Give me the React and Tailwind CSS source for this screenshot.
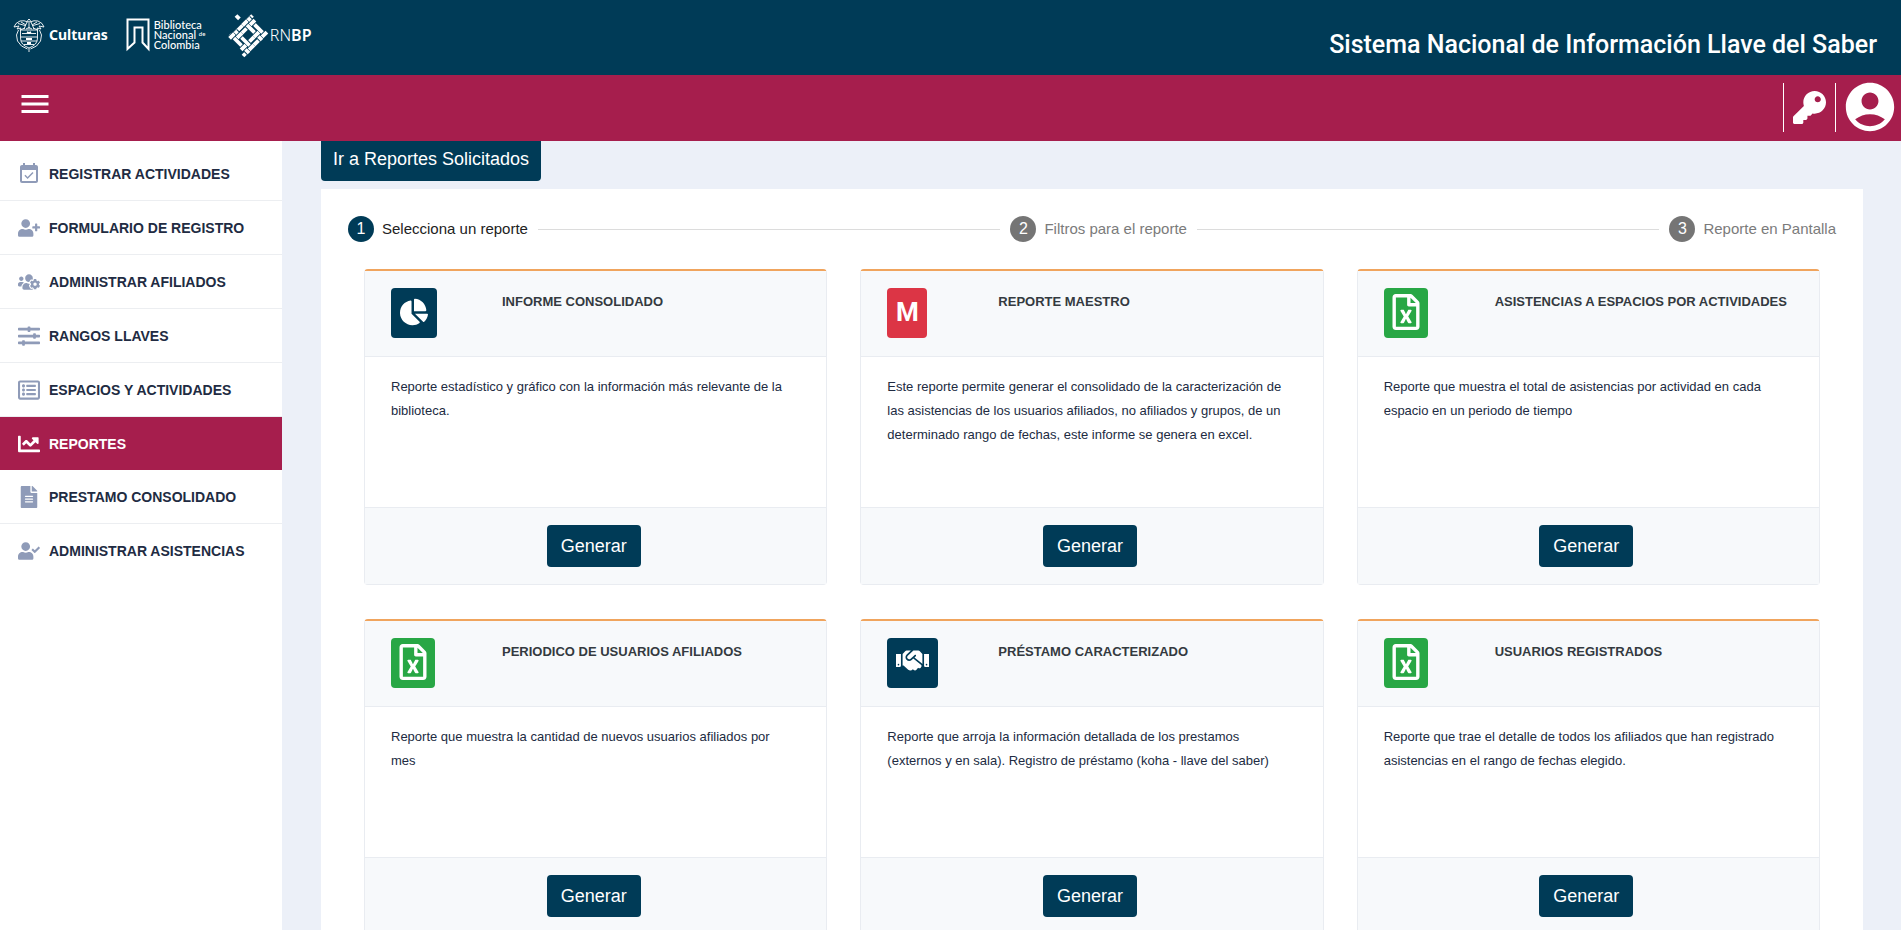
import React from "react";
import { MdMenu, MdAccountCircle, MdEventAvailable } from "react-icons/md";
import {
  FaKey,
  FaUserPlus,
  FaUsersCog,
  FaSlidersH,
  FaRegListAlt,
  FaChartLine,
  FaFileAlt,
  FaUserCheck,
  FaChartPie,
  FaRegFileExcel,
  FaHandshake,
} from "react-icons/fa";

const menu = [
  { label: "REGISTRAR ACTIVIDADES", Icon: MdEventAvailable, size: 26 },
  { label: "FORMULARIO DE REGISTRO", Icon: FaUserPlus, size: 22 },
  { label: "ADMINISTRAR AFILIADOS", Icon: FaUsersCog, size: 22 },
  { label: "RANGOS LLAVES", Icon: FaSlidersH, size: 22 },
  { label: "ESPACIOS Y ACTIVIDADES", Icon: FaRegListAlt, size: 22 },
  { label: "REPORTES", Icon: FaChartLine, size: 22, active: true },
  { label: "PRESTAMO CONSOLIDADO", Icon: FaFileAlt, size: 22 },
  { label: "ADMINISTRAR ASISTENCIAS", Icon: FaUserCheck, size: 22 },
];

const steps = ["Selecciona un reporte", "Filtros para el reporte", "Reporte en Pantalla"];

const reports = [
  {
    title: "INFORME CONSOLIDADO",
    text: "Reporte estadístico y gráfico con la información más relevante de la biblioteca.",
    kind: "pie",
  },
  {
    title: "REPORTE MAESTRO",
    text: "Este reporte permite generar el consolidado de la caracterización de las asistencias de los usuarios afiliados, no afiliados y grupos, de un determinado rango de fechas, este informe se genera en excel.",
    kind: "master",
  },
  {
    title: "ASISTENCIAS A ESPACIOS POR ACTIVIDADES",
    text: "Reporte que muestra el total de asistencias por actividad en cada espacio en un periodo de tiempo",
    kind: "excel",
  },
  {
    title: "PERIODICO DE USUARIOS AFILIADOS",
    text: "Reporte que muestra la cantidad de nuevos usuarios afiliados por mes",
    kind: "excel",
  },
  {
    title: "PRÉSTAMO CARACTERIZADO",
    text: "Reporte que arroja la información detallada de los prestamos (externos y en sala). Registro de préstamo (koha - llave del saber)",
    kind: "loan",
  },
  {
    title: "USUARIOS REGISTRADOS",
    text: "Reporte que trae el detalle de todos los afiliados que han registrado asistencias en el rango de fechas elegido.",
    kind: "excel",
  },
];

function Badge({ kind }) {
  if (kind === "pie")
    return (
      <span className="flex h-[50px] w-[46px] items-center justify-center rounded bg-[#003b57] pb-0.5 text-white">
        <FaChartPie size={28} />
      </span>
    );
  if (kind === "master")
    return (
      <span className="flex h-[50px] w-10 items-center justify-center rounded bg-[#dc3545] pb-0.5 font-['Roboto',sans-serif] text-[26px] font-bold text-white">
        M
      </span>
    );
  if (kind === "loan")
    return (
      <span className="flex h-[50px] w-[51px] items-start justify-center rounded bg-[#003b57] pt-1.5 text-white">
        <FaHandshake size={33} />
      </span>
    );
  return (
    <span className="flex h-[50px] w-11 items-center justify-center rounded bg-[#28a745] pb-0.5 text-white">
      <FaRegFileExcel size={36} />
    </span>
  );
}

function Crest() {
  return (
    <svg width="32" height="34" viewBox="0 0 32 34" fill="none" stroke="#fff" strokeWidth="0.9">
      <path d="M7.500 12 H24.500 V20 Q24.500 27 16 30 Q7.500 27 7.500 20 Z" />
      <path d="M9 15.500 H23 M8 19 H24 M8 23 H24 M11 26.500 H21" />
      <path d="M16 1 q-2 1 -1 3 q-4 -2 -8 -1 q-5 2 -6 6 l5 -1 -2 3 4 -1 -1 2 5 -2" />
      <path d="M16 1 q2 1 1 3 q4 -2 8 -1 q5 2 6 6 l-5 -1 2 3 -4 -1 1 2 -5 -2" />
      <path d="M5 5.500 l7 2 M27 5.500 l-7 2 M8 4 l5 3 M24 4 l-5 3" />
      <path d="M14 4 l-3 7 M18 4 l3 7 M16 3 v8 M13 11 q3 -3 6 0" />
      <path d="M5.500 12 l-2 5 1 6 4 5 6 3 M26.500 12 l2 5 -1 6 -4 5 -6 3 M16 30 v4" />
      <path d="M14 14 l2 1 2 -1 M13 21 h6 M14 25 h4" strokeWidth="1.8" />
    </svg>
  );
}

function BookMark() {
  return (
    <svg width="24" height="34" viewBox="0 0 24 34" fill="none" stroke="#fff" strokeWidth="2">
      <path d="M1.500 1.500 H22.500 V31 L16.500 24.500 V9.500 H8.500 V24.500 L1.500 31 Z" />
    </svg>
  );
}

// Woven diamond: rising strands have a constant x + y, falling strands a constant x - y.
const rising = [
  { s: 32, from: 26.5, to: 5 },
  { s: 39, from: 25, to: 9 },
  { s: 55, from: 35, to: 17 },
  { s: 63, from: 39, to: 17 },
];
const falling = [
  { d: 14, from: 22, to: 40 },
  { d: 6, from: 18, to: 36 },
  { d: -12, from: 9, to: 26 },
  { d: -20, from: 4, to: 23 },
];

function Strand({ d }) {
  return (
    <>
      <path d={d} stroke="#003b57" strokeWidth="5.600" />
      <path d={d} stroke="#fff" strokeWidth="3.800" />
    </>
  );
}

function Knot() {
  return (
    <svg width="44" height="50" viewBox="0 0 44 50" fill="none">
      {rising.map(({ s, from, to }) => (
        <Strand key={s} d={`M${from} ${s - from} L${to} ${s - to}`} />
      ))}
      {falling.map(({ d, from, to }) => (
        <Strand key={d} d={`M${from} ${from - d} L${to} ${to - d}`} />
      ))}
      {rising.flatMap(({ s }, i) =>
        falling.map(({ d }, j) => {
          if ((i + j) % 2 === 0) return null;
          const x = (s + d) / 2;
          const y = (s - d) / 2;
          return <Strand key={`${s}${d}`} d={`M${x + 2.4} ${y - 2.4} L${x - 2.4} ${y + 2.4}`} />;
        })
      )}
      <path d="M10 5.500 l3.400 3.400" stroke="#fff" strokeWidth="3.800" />
    </svg>
  );
}

export default function App() {
  return (
    <div className="flex h-screen flex-col overflow-hidden bg-[#ecf0f8] font-['Liberation_Sans',Arial,sans-serif] text-[#212b42]">
      <header className="flex h-[75px] shrink-0 items-start justify-between bg-[#003b57] pr-6 pl-[13px] text-white">
        <div className="flex h-[70px] items-center">
          <Crest />
          <span className="ml-1 font-['Noto_Sans',sans-serif] text-sm font-bold">Culturas</span>
          <span className="ml-[18px]">
            <BookMark />
          </span>
          <span className="ml-1 w-[54px] font-['Lato',sans-serif] text-[11px] leading-[10px] font-medium whitespace-nowrap">
            Biblioteca
            <br />
            Nacional <sup className="text-[6px] leading-none">de</sup>
            <br />
            Colombia
          </span>
          <span className="ml-[18px]">
            <Knot />
          </span>
          <span className="font-['Noto_Sans',sans-serif] text-base font-light">
            RN<b className="font-semibold">BP</b>
          </span>
        </div>
        <h1 className="pt-[29px] font-['Roboto',sans-serif] text-[25px] leading-8 font-medium">
          Sistema Nacional de Información Llave del Saber
        </h1>
      </header>

      <div className="flex h-[66px] shrink-0 items-center justify-between bg-[#a61e4d] pr-0.5 pb-0.5 pl-[17px] text-white">
        <button type="button" aria-label="Menú" className="pb-1.5">
          <MdMenu size={36} />
        </button>
        <div className="flex items-center">
          <button
            type="button"
            aria-label="Llave"
            className="flex h-[49px] w-[53px] items-center justify-center border-x border-white"
          >
            <FaKey size={33} />
          </button>
          <button type="button" aria-label="Cuenta" className="ml-[5px]">
            <MdAccountCircle size={58} />
          </button>
        </div>
      </div>

      <div className="flex min-h-0 flex-1">
        <nav className="w-[282px] shrink-0 bg-white pt-1.5">
          <ul>
            {menu.map(({ label, Icon, size, active }) => (
              <li key={label} className={active ? "" : "border-b border-[#eceef1] last:border-b-0"}>
                <a
                  href="#"
                  className={
                    active
                      ? "flex h-[53px] items-center gap-2 bg-[#a61e4d] pl-[17px] text-sm font-bold text-white"
                      : "flex h-[53px] items-center gap-2 pl-[17px] text-sm font-bold"
                  }
                >
                  <span className={active ? "flex w-6 justify-center" : "flex w-6 justify-center text-[#8f9bb8]"}>
                    <Icon size={size} />
                  </span>
                  {label}
                </a>
              </li>
            ))}
          </ul>
        </nav>

        <main className="flex-1 overflow-hidden pr-[38px] pl-[39px]">
          <button type="button" className="block h-10 rounded-b bg-[#003b57] px-3 pb-1 text-lg text-white">
            Ir a Reportes Solicitados
          </button>
          <section className="mt-2 bg-white pb-10">
            <ol className="flex items-center gap-2.5 px-[27px] pt-[27px] text-[15px]">
              {steps.map((step, i) => (
                <React.Fragment key={step}>
                  {i > 0 && <li aria-hidden="true" className="h-px flex-1 bg-[#dcdcdc]" />}
                  <li className={i === 0 ? "flex items-center gap-2 text-[#222]" : "flex items-center gap-2 text-[#7b7b7b]"}>
                    <span
                      className={
                        i === 0
                          ? "flex size-[26px] items-center justify-center rounded-full bg-[#003b57] text-base text-white"
                          : "flex size-[26px] items-center justify-center rounded-full bg-[#757575] text-base text-white"
                      }
                    >
                      {i + 1}
                    </span>
                    {step}
                  </li>
                </React.Fragment>
              ))}
            </ol>

            <div className="grid grid-cols-3 gap-x-[33px] gap-y-[34px] px-[43px] pt-[27px]">
              {reports.map((r) => (
                <article
                  key={r.title}
                  className="flex flex-col rounded border border-t-2 border-[#e9ecf1] border-t-[#f0a45d] bg-white"
                >
                  <div className="grid h-[86px] grid-cols-[111px_1fr] border-b border-[#e9ecf1] bg-[#f7f9fb] px-[26px] pt-[17px]">
                    <Badge kind={r.kind} />
                    <h2 className="pt-1 text-[13px] leading-5 font-bold text-[#343a40]">{r.title}</h2>
                  </div>
                  <p className="h-[150px] pt-[18px] pr-[34px] pl-[26px] text-[13px] leading-6">{r.text}</p>
                  <div className="flex justify-center border-t border-[#e9ecf1] bg-[#f7f9fb] py-[17px] pr-1">
                    <button type="button" className="h-[42px] rounded bg-[#003b57] px-3.5 text-lg text-white">
                      Generar
                    </button>
                  </div>
                </article>
              ))}
            </div>
          </section>
        </main>
      </div>
    </div>
  );
}
